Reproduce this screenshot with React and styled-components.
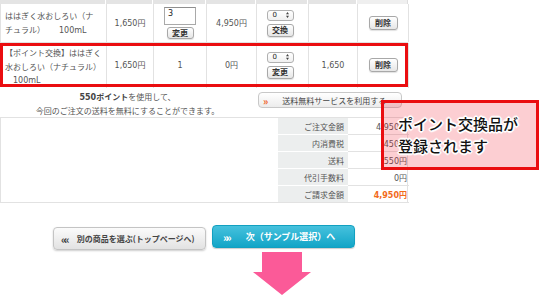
import React from "react";
import styled, { createGlobalStyle, css } from "styled-components";

const Global = createGlobalStyle`
  html, body {
    margin: 0;
    padding: 0;
    background: #fff;
  }
  body {
    font-family: "DejaVu Sans", "Noto Sans CJK JP", sans-serif;
    color: #555;
  }
`;

const Page = styled.div`
  position: relative;
  width: 555px;
  height: 304px;
  overflow: hidden;
`;

const Cart = styled.div`
  width: 408px;
`;

const cols = "106px 47px 53px 50px 52px 49px 51px";

const HeadRow = styled.div`
  display: grid;
  grid-template-columns: ${cols};
  height: 4px;
  & > span {
    background: #e4e4e4;
    border-right: 1px solid #fff;
  }
  & > span:last-child {
    background: #efefef;
    border-right: 1px solid #ddd;
  }
`;

const ItemRow = styled.div`
  position: relative;
  display: grid;
  grid-template-columns: ${cols};
  height: ${(p) => p.$h}px;
  border-bottom: 1px solid #e2e2e2;
  border-left: 1px solid #e2e2e2;
  box-sizing: border-box;
  ${(p) =>
    p.$highlight &&
    css`
      outline: 3px solid #ea0d10;
      outline-offset: -3px;
      z-index: 1;
    `}
`;

const Cell = styled.div`
  display: flex;
  flex-direction: column;
  align-items: center;
  justify-content: center;
  border-right: 1px solid #e2e2e2;
  font-size: 8px;
  line-height: 13.5px;
  box-sizing: border-box;
`;

const NameCell = styled.div`
  border-right: 1px solid #e2e2e2;
  font-family: "Noto Sans CJK JP", sans-serif;
  font-size: 8px;
  line-height: 13.5px;
  padding: ${(p) => p.$pt}px 0 0 4px;
  white-space: nowrap;
  box-sizing: border-box;
  em {
    font-style: normal;
    font-family: "DejaVu Sans", "Noto Sans CJK JP", sans-serif;
    margin-left: ${(p) => p.$indent}px;
  }
`;

const QtyInput = styled.input`
  width: 32px;
  height: 18px;
  box-sizing: border-box;
  border: 1px solid #a9a9a9;
  border-top-color: #8f8f8f;
  font: 8px "DejaVu Sans", sans-serif;
  color: #222;
  padding: 0 0 6px 3px;
  margin: 0 0 2px;
`;

const SmallBtn = styled.span`
  display: inline-flex;
  align-items: center;
  justify-content: center;
  width: ${(p) => p.$w || 27}px;
  height: ${(p) => p.$h || 12}px;
  box-sizing: border-box;
  border: 1px solid #a8a8a8;
  border-radius: 3px;
  background: linear-gradient(#ffffff, #e6e6e6);
  box-shadow: 0 1px 1px rgba(0, 0, 0, 0.12);
  font-family: "Noto Sans CJK JP", sans-serif;
  font-size: 8px;
  font-weight: 700;
  color: #333;
  line-height: 1;
`;

const Select = styled.span`
  display: inline-flex;
  align-items: center;
  justify-content: space-between;
  width: 27px;
  height: 11px;
  box-sizing: border-box;
  padding: 0 4px 0 5px;
  border: 1px solid #b0b0b0;
  border-radius: 3px;
  background: linear-gradient(#fff, #f0f0f0);
  font-size: 7px;
  color: #222;
  line-height: 1;
`;

const Stack = styled.div`
  display: flex;
  flex-direction: column;
  align-items: center;
  gap: 3px;
  margin-left: ${(p) => p.$shift || 0}px;
`;

const Yen = styled.span`
  white-space: nowrap;
  span {
    font-family: "Noto Sans CJK JP", sans-serif;
  }
`;

const PointRow = styled.div`
  display: flex;
  align-items: flex-start;
  height: 31px;
  border-bottom: 1px solid #e2e2e2;
  box-sizing: border-box;
`;

const PointText = styled.div`
  width: 255px;
  text-align: center;
  font-family: "Noto Sans CJK JP", sans-serif;
  font-size: 8px;
  line-height: 13px;
  padding-top: 3px;
  color: #555;
  b {
    font-family: "DejaVu Sans", "Noto Sans CJK JP", sans-serif;
    font-weight: 700;
    color: #444;
  }
`;

const FreeBtn = styled.span`
  display: flex;
  align-items: center;
  margin: 5px 0 0 3px;
  width: 144px;
  height: 16px;
  box-sizing: border-box;
  border: 1px solid #c8c8c8;
  border-radius: 4px;
  background: linear-gradient(#ffffff, #ececec);
  font-family: "Noto Sans CJK JP", sans-serif;
  font-size: 8px;
  color: #444;
  white-space: nowrap;
  overflow: hidden;
  i {
    font-style: normal;
    font-weight: 700;
    color: #f0601c;
    font-size: 10px;
    margin: 0 14px 0 4px;
  }
`;

const Summary = styled.div`
  display: grid;
  grid-template-columns: 277px 70px 61px;
  grid-auto-rows: 17px;
  border-left: 1px solid #e2e2e2;
  border-right: 1px solid #e2e2e2;
  box-sizing: border-box;
  width: 408px;
`;

const Blank = styled.div`
  grid-row: 1 / span 5;
  border-bottom: 1px solid #e2e2e2;
`;

const Label = styled.div`
  display: flex;
  align-items: center;
  justify-content: flex-end;
  padding-right: 4px;
  background: #eceeee;
  border-bottom: 1px solid #fff;
  font-family: "Noto Sans CJK JP", sans-serif;
  font-size: 8px;
  color: #555;
  &:nth-last-child(2) {
    border-bottom-color: #e2e2e2;
  }
`;

const Value = styled.div`
  display: flex;
  align-items: center;
  justify-content: flex-end;
  padding-right: 2px;
  border-bottom: 1px solid #e2e2e2;
  font-size: 8px;
  color: ${(p) => (p.$accent ? "#f26a1b" : "#555")};
  font-weight: ${(p) => (p.$accent ? 700 : 400)};
`;

const Nav = styled.div`
  display: flex;
  justify-content: center;
  align-items: flex-start;
  gap: 6px;
  width: 408px;
  margin-top: 22px;
  height: 27px;
`;

const NavBtn = styled.span`
  display: flex;
  align-items: center;
  box-sizing: border-box;
  height: 23px;
  border-radius: 4px;
  font-family: "Noto Sans CJK JP", sans-serif;
  font-weight: 700;
  font-size: 8px;
  white-space: nowrap;
  i {
    font-style: normal;
    font-size: 11px;
    letter-spacing: -3px;
  }
  ${(p) =>
    p.$primary
      ? css`
          width: 143px;
          padding-left: 10px;
          color: #fff;
          background: linear-gradient(#46c1dd, #12a5c7);
          border: 1px solid #12a0c0;
          box-shadow: 0 1px 1px rgba(0, 0, 0, 0.2);
          font-size: 9px;
          i {
            margin-right: 17px;
          }
        `
      : css`
          width: 153px;
          margin-top: 2px;
          padding-left: 7px;
          color: #444;
          background: linear-gradient(#fbfbfb, #e2e2e2);
          border: 1px solid #c4c4c4;
          box-shadow: 0 1px 2px rgba(0, 0, 0, 0.2);
          i {
            margin-right: 10px;
          }
        `}
`;

const ArrowWrap = styled.div`
  padding-left: 250px;
  line-height: 0;
`;

const Callout = styled.div`
  position: absolute;
  left: 381px;
  top: 100px;
  width: 158px;
  height: 70px;
  box-sizing: border-box;
  border: 3px solid #ea0d10;
  background: rgba(240, 30, 50, 0.22);
  padding: 10px 0 0 14px;
  font-family: "Noto Sans CJK JP", sans-serif;
  font-size: 15px;
  font-weight: 500;
  line-height: 22px;
  color: #111;
  text-shadow: 1px 0 0 #fff, -1px 0 0 #fff, 0 1px 0 #fff, 0 -1px 0 #fff,
    1px 1px 0 #fff, -1px -1px 0 #fff, 1px -1px 0 #fff, -1px 1px 0 #fff,
    2px 0 1px #fff, -2px 0 1px #fff, 0 2px 1px #fff, 0 -2px 1px #fff;
`;

const Sel = () => (
  <Select>
    0
    <svg width="3" height="6" viewBox="0 0 3 6">
      <path d="M0 2.2 L1.5 0 L3 2.2Z M0 3.8 L1.5 6 L3 3.8Z" fill="#444" />
    </svg>
  </Select>
);

const Price = ({ v }) => (
  <Yen>
    {v}
    <span>円</span>
  </Yen>
);

export default function App() {
  return (
    <Page>
      <Global />
      <Cart>
        <HeadRow>
          {Array.from({ length: 7 }).map((_, i) => (
            <span key={i} />
          ))}
        </HeadRow>
        <ItemRow $h={39}>
          <NameCell $pt={5} $indent={14}>
            ははぎく水おしろい（ナ
            <br />
            チュラル）<em>100mL</em>
          </NameCell>
          <Cell>
            <Price v="1,650" />
          </Cell>
          <Cell>
            <QtyInput defaultValue="3" readOnly />
            <SmallBtn>変更</SmallBtn>
          </Cell>
          <Cell>
            <Price v="4,950" />
          </Cell>
          <Cell>
            <Stack $shift={-5}>
              <Sel />
              <SmallBtn $h={13}>交換</SmallBtn>
            </Stack>
          </Cell>
          <Cell />
          <Cell>
            <SmallBtn $w={29} $h={14}>削除</SmallBtn>
          </Cell>
        </ItemRow>
        <ItemRow $h={44} $highlight>
          <NameCell $pt={3} $indent={8}>
            【ポイント交換】ははぎく
            <br />
            水おしろい（ナチュラル）
            <br />
            <em>100mL</em>
          </NameCell>
          <Cell>
            <Price v="1,650" />
          </Cell>
          <Cell>1</Cell>
          <Cell>
            <Price v="0" />
          </Cell>
          <Cell>
            <Stack $shift={-5}>
              <Sel />
              <SmallBtn $h={13}>変更</SmallBtn>
            </Stack>
          </Cell>
          <Cell>1,650</Cell>
          <Cell>
            <SmallBtn $w={29} $h={14}>削除</SmallBtn>
          </Cell>
        </ItemRow>
        <PointRow>
          <PointText>
            <b>550ポイント</b>を使用して、
            <br />
            今回のご注文の送料を無料にすることができます。
          </PointText>
          <FreeBtn>
            <i>»</i>送料無料サービスを利用する
          </FreeBtn>
        </PointRow>
        <Summary>
          <Blank />
          <Label>ご注文金額</Label>
          <Value>
            <Price v="4,950" />
          </Value>
          <Label>内消費税</Label>
          <Value>
            <Price v="450" />
          </Value>
          <Label>送料</Label>
          <Value>
            <Price v="550" />
          </Value>
          <Label>代引手数料</Label>
          <Value>
            <Price v="0" />
          </Value>
          <Label>ご請求金額</Label>
          <Value $accent>
            <Price v="4,950" />
          </Value>
        </Summary>
      </Cart>
      <Nav>
        <NavBtn>
          <i>««</i>別の商品を選ぶ(トップページへ)
        </NavBtn>
        <NavBtn $primary>
          <i>»»</i>次（サンプル選択）へ
        </NavBtn>
      </Nav>
      <ArrowWrap>
        <svg width="64" height="44" viewBox="0 0 64 44">
          <polygon
            points="12,0 52,0 52,20 61,20 32,43 3,20 12,20"
            fill="#fb5a98"
          />
        </svg>
      </ArrowWrap>
      <Callout>
        ポイント交換品が
        <br />
        登録されます
      </Callout>
    </Page>
  );
}
